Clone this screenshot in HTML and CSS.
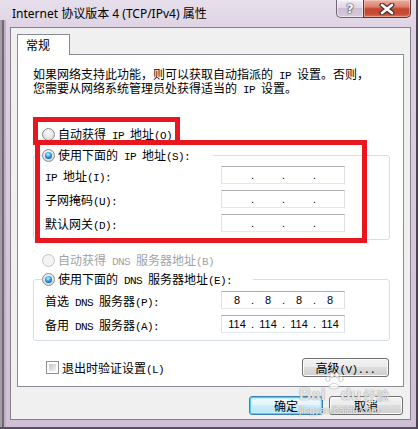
FILE: index.html
```html
<!DOCTYPE html>
<html>
<head>
<meta charset="utf-8">
<link rel="stylesheet" href="styles.css">
</head>
<body>
<div class="window">
  <div class="titlebar">
    <div class="title">Internet 协议版本 4 (TCP/IPv4) 属性</div>
    <div class="caption-btns">
      <div class="cbtn help">?</div>
      <div class="cbtn close">
        <svg width="18" height="12" viewBox="0 0 18 12">
          <path d="M4 2 L14 10 M14 2 L4 10" stroke="#4a3030" stroke-width="5" stroke-linecap="round"/>
          <path d="M4 2 L14 10 M14 2 L4 10" stroke="#ffffff" stroke-width="2.6" stroke-linecap="round"/>
        </svg>
      </div>
    </div>
  </div>
  <div class="client">
    <div class="tabs"><div class="tab">常规</div></div>
    <div class="panel">
      <p class="desc">如果网络支持此功能，则可以获取自动指派的<span class="en"> IP </span>设置。否则，<br>您需要从网络系统管理员处获得适当的<span class="en"> IP </span>设置。</p>
      <div class="opt opt-first"><span class="radio"></span><span>自动获得<span class="en"> IP </span>地址<span class="en">(O)</span></span></div>
      <fieldset class="group group-ip">
        <legend class="legend legend-ip"><div class="opt"><span class="radio checked"></span><span>使用下面的<span class="en"> IP </span>地址<span class="en">(S):</span></span></div></legend>
        <div class="fields">
          <div class="field"><span class="lbl"><span class="en">IP </span>地址<span class="en">(I):</span></span><div class="ipbox"><span class="seg"></span><span class="dot">.</span><span class="seg"></span><span class="dot">.</span><span class="seg"></span><span class="dot">.</span><span class="seg"></span></div></div>
          <div class="field"><span class="lbl">子网掩码<span class="en">(U):</span></span><div class="ipbox"><span class="seg"></span><span class="dot">.</span><span class="seg"></span><span class="dot">.</span><span class="seg"></span><span class="dot">.</span><span class="seg"></span></div></div>
          <div class="field"><span class="lbl">默认网关<span class="en">(D):</span></span><div class="ipbox"><span class="seg"></span><span class="dot">.</span><span class="seg"></span><span class="dot">.</span><span class="seg"></span><span class="dot">.</span><span class="seg"></span></div></div>
        </div>
      </fieldset>
      <div class="opt opt-dns-auto disabled"><span class="radio"></span><span>自动获得<span class="en"> DNS </span>服务器地址<span class="en">(B)</span></span></div>
      <fieldset class="group group-dns">
        <legend class="legend legend-dns"><div class="opt"><span class="radio checked"></span><span>使用下面的<span class="en"> DNS </span>服务器地址<span class="en">(E):</span></span></div></legend>
        <div class="fields fields-dns">
          <div class="field"><span class="lbl">首选<span class="en"> DNS </span>服务器<span class="en">(P):</span></span><div class="ipbox"><span class="seg">8</span><span class="dot">.</span><span class="seg">8</span><span class="dot">.</span><span class="seg">8</span><span class="dot">.</span><span class="seg">8</span></div></div>
          <div class="field"><span class="lbl">备用<span class="en"> DNS </span>服务器<span class="en">(A):</span></span><div class="ipbox"><span class="seg">114</span><span class="dot">.</span><span class="seg">114</span><span class="dot">.</span><span class="seg">114</span><span class="dot">.</span><span class="seg">114</span></div></div>
        </div>
      </fieldset>
      <div class="bottom-row">
        <div class="check"><span class="checkbox"></span><span>退出时验证设置<span class="en">(L)</span></span></div>
        <button class="btn adv">高级<span class="en">(V)...</span></button>
      </div>
    </div>
    <div class="actions">
      <button class="btn btn-ok">确定</button>
      <button class="btn btn-cancel">取消</button>
    </div>
  </div>

  <div class="mark mark1"></div>
  <div class="mark mark2"></div>

  <div class="watermark">
    <div class="wm-logo">
      <span class="wm-bai">Bai</span>
      <svg class="wm-paw" width="20" height="18" viewBox="0 0 20 18">
        <g fill="rgba(255,255,255,0.75)" stroke="rgba(150,150,150,0.55)" stroke-width="0.8">
          <ellipse cx="4" cy="7" rx="2.2" ry="2.8"/>
          <ellipse cx="8" cy="3" rx="2.2" ry="2.8"/>
          <ellipse cx="13" cy="3" rx="2.2" ry="2.8"/>
          <ellipse cx="17" cy="7" rx="2.2" ry="2.8"/>
          <path d="M5 15 C6 10 14 10 15 15 C14 17.5 6 17.5 5 15 Z"/>
        </g>
      </svg>
      <span class="wm-du">du</span>
      <span class="wm-jy">经验</span>
    </div>
    <div class="wm-url">jingyan.baidu.com</div>
  </div>
</div>
</body>
</html>
```

FILE: styles.css
```css
* { box-sizing: border-box; }
html, body { margin: 0; padding: 0; }
body {
  width: 418px;
  height: 429px;
  overflow: hidden;
  background: #d6c9dc;
  font-family: "Noto Sans CJK SC", sans-serif;
  font-size: 12px;
  color: #000;
}
.en {
  font-family: "Liberation Mono", monospace;
  font-size: 11px;
  letter-spacing: -0.6px;
}

.window {
  width: 418px;
  height: 429px;
  position: relative;
  display: flex;
  flex-direction: column;
  border-right: 2px solid #4c4352;
  border-bottom: 2px solid #594e5f;
  background:
    linear-gradient(to right, #a39ea6 0 2px, #6f6873 2px 4px, #bfb0c5 4px 6px) 0 20px / 6px 100% no-repeat,
    linear-gradient(#e7dfeb 0, #ddd2e3 30px, #cfc0d6 100%);
}

/* title bar */
.titlebar {
  height: 27px;
  display: flex;
  align-items: flex-start;
  flex: none;
}
.title {
  padding-left: 12px;
  line-height: 27px;
  font-family: "Noto Sans", "Noto Sans CJK SC", sans-serif;
  font-size: 12px;
  color: #000;
  white-space: nowrap;
}
.caption-btns {
  margin-left: auto;
  margin-right: 5px;
  display: flex;
  height: 18px;
}
.cbtn {
  height: 18px;
  display: flex;
  align-items: center;
  justify-content: center;
}
.help {
  width: 27px;
  border: 1px solid #6e6475;
  border-top: none;
  border-right: none;
  border-radius: 0 0 0 5px;
  background: linear-gradient(#f1ecf3 0%, #e0d8e4 45%, #cbbfd1 50%, #d6cbdb 100%);
  box-shadow: inset 0 0 0 1px rgba(255,255,255,0.55);
  font-family: "DejaVu Sans", sans-serif;
  font-weight: bold;
  font-size: 13px;
  color: #fff;
  text-shadow: 0 0 1px #3c3a44, 0 0 1px #3c3a44, 0 0 2px #3c3a44;
}
.close {
  width: 48px;
  border: 1px solid #5e3532;
  border-top: none;
  border-radius: 0 0 5px 0;
  background: linear-gradient(#eab0a2 0%, #dc7f6b 40%, #c7452f 52%, #c94a32 80%, #d9725a 100%);
  box-shadow: inset 0 0 0 1px rgba(255,220,210,0.45);
}

/* client area */
.client {
  flex: 1;
  margin: 0 5px 7px 10px;
  border: 1px solid #85808a;
  background: #f0f0f0;
  display: flex;
  flex-direction: column;
}
.tabs {
  padding: 6px 0 0 6px;
  display: flex;
}
.tab {
  width: 53px;
  height: 21px;
  border: 1px solid #898c95;
  border-bottom: none;
  background: #fff;
  margin-bottom: -1px;
  position: relative;
  z-index: 1;
  padding-left: 8px;
  line-height: 19px;
  font-size: 12px;
}
.panel {
  margin: 0 6px;
  height: 333px;
  border: 1px solid #898c95;
  background: #fff;
  display: flex;
  flex-direction: column;
}
.desc {
  margin: 13px 0 0 15px;
  line-height: 12px;
  white-space: nowrap;
}

.opt {
  display: flex;
  align-items: center;
  gap: 3px;
  height: 13px;
  line-height: 13px;
  white-space: nowrap;
}
.opt-first { margin: 32px 0 0 24px; }
.opt-dns-auto { margin: 14px 0 0 24px; }
.disabled { color: #a3a3a3; }

.radio {
  flex: none;
  width: 13px;
  height: 13px;
  border-radius: 50%;
  border: 1px solid #8b8b8b;
  background: radial-gradient(circle at 50% 35%, #fbfbfb 0, #e9e9e9 45%, #cdcdcd 100%);
  position: relative;
}
.radio.checked::after {
  content: "";
  position: absolute;
  left: 2px;
  top: 2px;
  width: 7px;
  height: 7px;
  border-radius: 50%;
  background: radial-gradient(circle at 45% 35%, #c8f0ff 0, #48b4ef 35%, #1366b3 70%, #0c3f73 100%);
}
.disabled .radio {
  border-color: #c4c4c4;
  background: #f4f4f4;
}

.group {
  margin: 8px 13px 0 15px;
  padding: 0;
  border: 1px solid #d5dfe5;
  border-radius: 3px;
  min-width: 0;
}
.group-dns { margin-top: 6px; }
.legend {
  padding: 0;
  margin-left: 8px;
  height: 13px;
}
.legend-ip { width: 171px; }
.legend-dns { width: 211px; }

.fields {
  padding: 4px 0 7px 11px;
  display: flex;
  flex-direction: column;
  gap: 6px;
}
.fields-dns { padding-top: 5px; }
.field {
  display: flex;
  align-items: center;
  height: 18px;
}
.lbl {
  width: 176px;
  white-space: nowrap;
}
.ipbox {
  width: 124px;
  height: 18px;
  border: 1px solid;
  border-color: #abadb3 #dbdfe6 #e3e9ef #e2e3ea;
  background: #fff;
  display: flex;
  align-items: center;
  padding-left: 1px;
  font-family: "Liberation Sans", sans-serif;
  font-size: 11px;
  line-height: 14px;
}
.seg {
  width: 28px;
  text-align: center;
}
.dot {
  width: 3px;
  text-align: center;
}

.bottom-row {
  margin: 17px 14px 0 28px;
  height: 19px;
  display: flex;
  align-items: center;
  justify-content: space-between;
}
.check {
  display: flex;
  align-items: center;
  gap: 3px;
  white-space: nowrap;
}
.checkbox {
  width: 13px;
  height: 13px;
  border: 1px solid #8e8f8f;
  padding: 2px;
  background: linear-gradient(135deg, #c6c6c6, #f2f2f2) content-box, #fff;
}

.btn {
  font-family: "Noto Sans CJK SC", sans-serif;
  font-size: 12px;
  color: #000;
  padding: 0;
  height: 19px;
  line-height: 17px;
  border: 1px solid #707070;
  border-radius: 3px;
  background: linear-gradient(#f2f2f2 0%, #ebebeb 45%, #dddddd 50%, #cfcfcf 100%);
  box-shadow: inset 0 0 0 1px #fbfbfb;
}
.adv { width: 87px; }
.actions {
  display: flex;
  justify-content: flex-end;
  gap: 6px;
  padding: 9px 7px 0 0;
}
.btn-ok, .btn-cancel { width: 74px; }
.btn-ok {
  border-color: #3c7fb1;
  background: linear-gradient(#f2fafe 0%, #e3f4fc 45%, #cdecfc 50%, #bce3f8 100%);
  box-shadow: inset 0 0 0 1px #4fd0fb, inset 0 0 0 2px #bfeeff;
}

/* red annotation rectangles */
.mark {
  position: absolute;
  border: 5px solid #e8161f;
}
.mark1 { left: 33px; top: 117px; width: 147px; height: 28px; }
.mark2 { left: 35px; top: 140px; width: 332px; height: 103px; }

/* watermark */
.watermark {
  position: absolute;
  left: 299px;
  top: 372px;
  width: 92px;
  pointer-events: none;
}
.wm-logo {
  display: flex;
  align-items: flex-end;
  height: 31px;
}
.wm-bai, .wm-du {
  font-family: "Liberation Sans", sans-serif;
  font-weight: bold;
  font-size: 17px;
  line-height: 17px;
  color: rgba(255,255,255,0.8);
  text-shadow: 0 0 1px rgba(110,110,110,0.6), 0 0 1px rgba(110,110,110,0.6);
}
.wm-paw {
  align-self: flex-start;
  margin: 0 -4px 0 -1px;
}
.wm-jy {
  font-family: "Noto Sans CJK SC", sans-serif;
  font-size: 13px;
  line-height: 17px;
  margin-left: 2px;
  color: rgba(255,255,255,0.8);
  text-shadow: 0 0 1px rgba(110,110,110,0.6), 0 0 1px rgba(110,110,110,0.6);
}
.wm-url {
  font-family: "Liberation Sans", sans-serif;
  font-size: 10px;
  line-height: 11px;
  margin-top: 2px;
  color: rgba(255,255,255,0.85);
  text-shadow: 0 0 1px rgba(110,110,110,0.55), 0 0 1px rgba(110,110,110,0.55);
}
```
